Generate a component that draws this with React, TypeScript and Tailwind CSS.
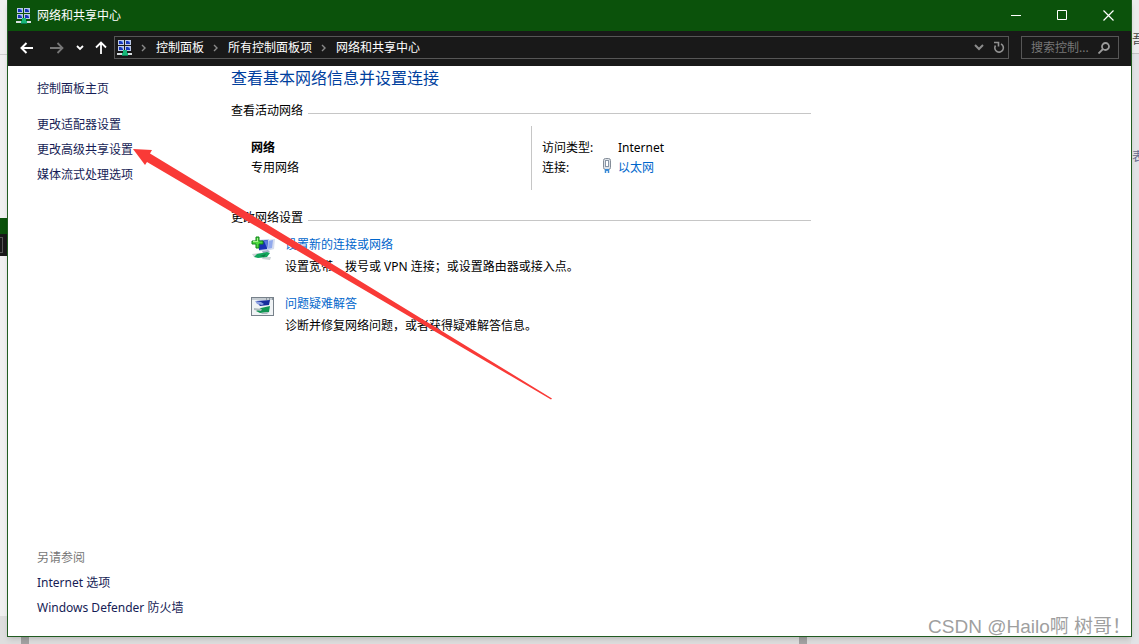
import type { ReactNode } from "react";

const crumbs = ["控制面板", "所有控制面板项", "网络和共享中心"];
const tasks = ["更改适配器设置", "更改高级共享设置", "媒体流式处理选项"];
const related = ["Internet 选项", "Windows Defender 防火墙"];

function NetworkIcon() {
  return (
    <svg width="16" height="17" viewBox="0 0 16 17" className="shrink-0" aria-hidden="true">
      {[[1, 1], [8, 1], [1, 7], [8, 7]].map(([x, y]) => (
        <g key={`${x}-${y}`}>
          <rect x={x} y={y} width="6" height="5" fill="#bccae6" />
          <rect x={x + 1} y={y + 1} width="4" height="3" fill="#1636b8" />
          <path d={`M${x + 3} ${y + 1}h2v2z`} fill="#7fa6ff" />
        </g>
      ))}
      <path d="M6 11h4v3h3v2H3v-2h3z" fill="#18b878" />
      <path d="M0 14h5v2H0zM11 14h4v2h-4z" fill="#d9dfe2" />
      <path d="M5 16h6v1H5z" fill="#0b7c55" />
    </svg>
  );
}

function NewConnectionIcon() {
  return (
    <svg width="24" height="26" viewBox="0 0 24 26" aria-hidden="true">
      <path d="M14 4l10-1-1 10-7 2z" fill="#d5dcef" />
      <path d="M17 5l5-1-1 8-5 1z" fill="#91a9ed" />
      <path d="M7 4l11-1-1 11-9 1z" fill="#c3d0ec" />
      <path d="M8 5l9-1-1 9-8 1z" fill="#1831b4" />
      <path d="M13 5l4-1-1 8z" fill="#5c7ce0" />
      <path d="M11 15l6-1 2 2-7 1z" fill="#a5b1ca" />
      <path d="M1 18l8-1 3 2-9 2zM12 21l8 0-1 3-8-1z" fill="#cbd2d5" />
      <path d="M6 18l10-2 3 1-3 4-9 1-4-1z" fill="#12a65d" />
      <path d="M9 20l6-2-2 3z" fill="#0b7a45" />
      <path d="M5 1h3v4h4v3H8v4H5V8H1V5h4z" fill="#4fd83f" stroke="#0d8418" />
      <path d="M6 2h1v4H2V5h4z" fill="#a6f28d" />
    </svg>
  );
}

function TroubleshootIcon() {
  return (
    <svg width="24" height="22" viewBox="0 -2 24 22" aria-hidden="true">
      <rect x="0.5" y="0.5" width="22" height="18" fill="#f0f3f5" stroke="#77818a" />
      <path d="M1 1h21v2H1z" fill="#c5ccd2" />
      <path d="M15 2h1M18 2h1M21 2h1" stroke="#59636c" />
      <path d="M5 4l14-1-1 5-9 1z" fill="#172d9d" />
      <path d="M4 4l6 1 3 2-2 1-5-1z" fill="#8ea2e2" />
      <path d="M10 11l9-2-1 6-9 1-4-2z" fill="#129653" />
      <path d="M3 11l8 1-1 2-7-1zM10 16l8-1-2 2h-5z" fill="#aeb9be" />
    </svg>
  );
}

function EthernetIcon() {
  return (
    <svg width="10" height="16" viewBox="0 0 10 16" aria-hidden="true">
      <rect x="1.5" y="0.5" width="7" height="11" rx="2" fill="#dde2e8" stroke="#848d98" />
      <rect x="3.5" y="2.5" width="3" height="6" fill="#fff" stroke="#8995a5" />
      <path d="M3 11h4v2H3z" fill="#3a8ad6" />
      <path d="M3.5 12v3M6.5 12v3" stroke="#3a8ad6" strokeWidth="1.5" />
    </svg>
  );
}

function Chevron() {
  return (
    <svg width="6" height="8" viewBox="0 0 6 8" fill="none" stroke="#8a8a8a" strokeWidth="1.4" aria-hidden="true">
      <path d="M1 1l3 3-3 3" />
    </svg>
  );
}

function TitleBar() {
  return (
    <header className="flex h-[31px] items-center bg-[#0b520b] pl-2 text-white">
      <NetworkIcon />
      <h1 className="ml-[5px]">网络和共享中心</h1>
      <div className="ml-auto flex h-full">
        <button aria-label="最小化" className="flex w-[46px] items-center justify-center">
          <svg width="11" height="11" stroke="white" aria-hidden="true"><path d="M0 5.5h10" /></svg>
        </button>
        <button aria-label="最大化" className="flex w-[46px] items-center justify-center">
          <svg width="11" height="11" stroke="white" fill="none" aria-hidden="true"><path d="M.5 .5h9v9h-9z" /></svg>
        </button>
        <button aria-label="关闭" className="flex w-[46px] items-center justify-center">
          <svg width="11" height="11" stroke="white" strokeWidth="1.2" aria-hidden="true"><path d="M.5 .5l10 10M10.5 .5l-10 10" /></svg>
        </button>
      </div>
    </header>
  );
}

function Toolbar() {
  return (
    <div className="flex h-[35px] items-start bg-[#191919] pt-[5px] pr-3 text-white">
      <nav aria-label="导航" className="flex h-[23px] w-[106px] shrink-0 items-center pl-3">
        <button aria-label="后退">
          <svg width="14" height="12" fill="none" stroke="white" strokeWidth="2" aria-hidden="true"><path d="M13 6H2M6.5 1l-5 5 5 5" /></svg>
        </button>
        <button aria-label="前进" className="ml-4">
          <svg width="14" height="12" fill="none" stroke="#777" strokeWidth="1.8" aria-hidden="true"><path d="M0 6h12M7.5 1l5 5-5 5" /></svg>
        </button>
        <button aria-label="最近位置" className="ml-3">
          <svg width="8" height="6" fill="none" stroke="white" strokeWidth="1.8" aria-hidden="true"><path d="M1 1l3 3 3-3" /></svg>
        </button>
        <button aria-label="向上" className="ml-[11px]">
          <svg width="12" height="13" fill="none" stroke="white" strokeWidth="1.8" aria-hidden="true"><path d="M6 13V2M1 6.5l5-5 5 5" /></svg>
        </button>
      </nav>
      <div className="flex h-[23px] min-w-0 flex-1 items-center border border-[#565656] pl-[2px]">
        <NetworkIcon />
        <ol className="ml-2 flex items-center">
          {crumbs.map((c) => (
            <li key={c} className="flex items-center">
              <Chevron />
              <a href="#" className="mr-[9px] ml-[9px]">{c}</a>
            </li>
          ))}
        </ol>
        <button aria-label="展开" className="ml-auto">
          <svg width="10" height="7" fill="none" stroke="#8c8c8c" strokeWidth="2" aria-hidden="true"><path d="M1 1l4 4 4-4" /></svg>
        </button>
        <button aria-label="刷新" className="mr-[3px] ml-[9px]">
          <svg width="12" height="13" fill="none" stroke="#929292" strokeWidth="1.6" aria-hidden="true">
            <path d="M8 3A4.300 4.300 0 1 1 2.500 4.500M1 1.500h4.500v4" />
          </svg>
        </button>
      </div>
      <label className="ml-3 flex h-[23px] w-[98px] items-center border border-[#565656] pr-2 pl-[9px]">
        <input aria-label="搜索控制面板" placeholder="搜索控制..." className="w-0 min-w-0 flex-1 bg-transparent outline-none placeholder:text-[#777]" />
        <svg width="12" height="12" fill="none" stroke="#9b9b9b" strokeWidth="1.8" aria-hidden="true">
          <circle cx="7.5" cy="4.5" r="3.5" />
          <path d="M5 7L.5 11.5" />
        </svg>
      </label>
    </div>
  );
}

function Section({ title, children }: { title: string; children: ReactNode }) {
  return (
    <section>
      <div className="flex items-center gap-[5px] leading-4">
        <h3>{title}</h3>
        <div className="mt-1 h-px flex-1 bg-[#c6c6c6]" />
      </div>
      {children}
    </section>
  );
}

function Action({ icon, title, text }: { icon: ReactNode; title: string; text: string }) {
  return (
    <li className="flex gap-[10px]">
      <div className="w-6 shrink-0 pt-px">{icon}</div>
      <div>
        <a href="#" className="block leading-5 text-[#0066cc]">{title}</a>
        <p className="leading-6">{text}</p>
      </div>
    </li>
  );
}

// Slices of the windows behind that stay visible around the edges.
function Backdrop() {
  return (
    <div className="absolute inset-0 overflow-hidden bg-[#dedede]" aria-hidden="true">
      <div className="absolute top-0 left-0 h-[616px] w-2 bg-[#f0f0f0]" />
      <div className="absolute top-[54px] left-0 h-px w-2 bg-[#cfcfcf]" />
      <div className="absolute top-[218px] left-0 h-4 w-2 bg-[#0b520b]" />
      <div className="absolute top-[234px] left-0 h-[22px] w-2 bg-[#191919]" />
      <div className="absolute top-[237px] -left-1 h-4 w-[7px] border border-[#565656]" />
      <div className="absolute top-0 right-0 h-full w-2 bg-[#e2e3e6]" />
      <div className="absolute top-0 right-0 h-[54px] w-2 border-b border-[#c4c4c4] bg-[#ececec]" />
      <span className="absolute top-8 -right-[5px] text-[#444]">吾</span>
      <span className="absolute top-[149px] -right-[5px] text-[#666a8c]">表</span>
      <div className="absolute bottom-0 left-[21px] h-2 w-2 bg-[#a3a3a3]" />
      <div className="absolute bottom-0 left-[799px] h-2 w-2 bg-[#a3a3a3]" />
    </div>
  );
}

export default function App() {
  return (
    <div className="relative flex min-h-screen px-[7px] pb-[7px] font-['Noto_Sans','Noto_Sans_CJK_SC',sans-serif] text-xs text-black">
      <Backdrop />
      <div className="relative flex flex-1 flex-col border-x border-b border-[#215c21] bg-white shadow-md">
        <TitleBar />
        <Toolbar />
        <div className="flex flex-1">
          <aside className="flex w-[223px] shrink-0 flex-col pt-[10px] pb-4 pl-[29px] leading-[25px] text-[#151c55]">
            <a href="#" className="mb-[11px]">控制面板主页</a>
            {tasks.map((t) => (
              <a key={t} href="#">{t}</a>
            ))}
            <div className="mt-auto flex flex-col">
              <h2 className="text-[#777]">另请参阅</h2>
              {related.map((t) => (
                <a key={t} href="#">{t}</a>
              ))}
            </div>
          </aside>
          <main className="max-w-[580px] flex-1">
            <h2 className="mb-[13px] text-base leading-6 text-[#003f9e]">查看基本网络信息并设置连接</h2>
            <Section title="查看活动网络">
              <div className="mt-[7px] mb-5 grid h-16 grid-cols-[300px_1fr] leading-5">
                <div className="pt-3 pl-5">
                  <p className="font-bold">网络</p>
                  <p>专用网络</p>
                </div>
                <dl className="grid grid-cols-[60px_16px_1fr] content-start border-l border-[#c6c6c6] pt-3 pl-[10px]">
                  <dt className="col-span-2">访问类型:</dt>
                  <dd>Internet</dd>
                  <dt>连接:</dt>
                  <dd className="col-span-2 flex">
                    <span className="w-4"><EthernetIcon /></span>
                    <a href="#" className="text-[#0066cc]">以太网</a>
                  </dd>
                </dl>
              </div>
            </Section>
            <Section title="更改网络设置">
              <ul className="mt-[9px] flex flex-col gap-[15px] pl-5">
                <Action icon={<NewConnectionIcon />} title="设置新的连接或网络" text="设置宽带、拨号或 VPN 连接；或设置路由器或接入点。" />
                <Action icon={<TroubleshootIcon />} title="问题疑难解答" text="诊断并修复网络问题，或者获得疑难解答信息。" />
              </ul>
            </Section>
          </main>
        </div>
      </div>
      <svg className="pointer-events-none absolute top-[140px] left-[125px]" width="430" height="264" viewBox="125 140 430 264" aria-hidden="true">
        <path d="M133 149l19 1-2 3.500L320 256.500 552 398.500 551 399.500 320 264 147 162l-2 3z" fill="#f93a37" />
      </svg>
      <p className="absolute right-2 bottom-[5px] font-['Liberation_Sans','Noto_Sans_CJK_SC',sans-serif] text-[19px] leading-6 text-[#9f9f9f]">
        CSDN @Hailo啊 树哥！
      </p>
    </div>
  );
}
